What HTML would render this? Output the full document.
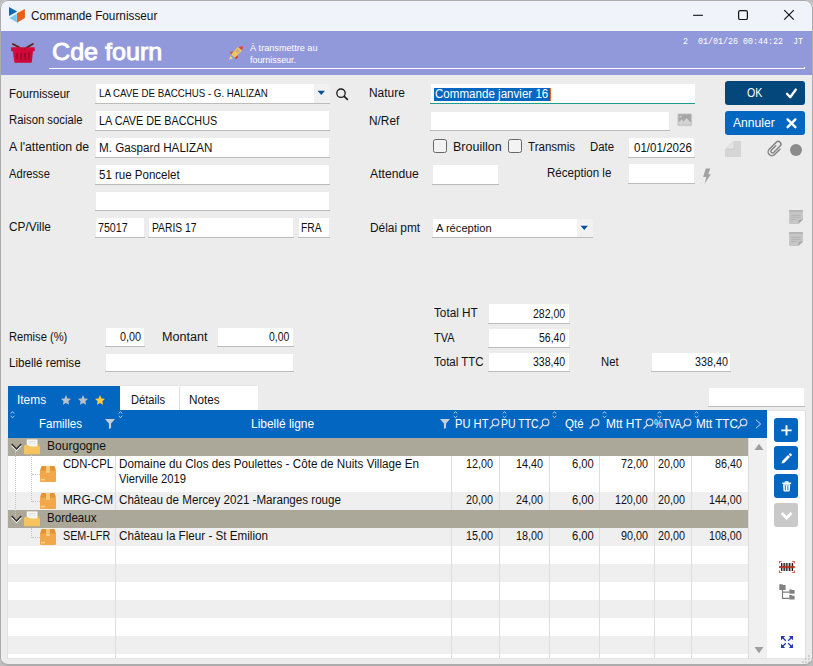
<!DOCTYPE html>
<html><head><meta charset="utf-8"><title>Commande Fournisseur</title>
<style>
*{box-sizing:border-box;margin:0;padding:0}
html,body{width:813px;height:666px;overflow:hidden;background:#bdbdbd;font-family:"Liberation Sans",sans-serif}
#win{position:absolute;left:0;top:0;width:813px;height:666px;background:#ececec;border-radius:8px;overflow:hidden}
#frame{position:absolute;left:0;top:0;width:813px;height:666px;border:1px solid #acacac;border-bottom-width:2px;border-radius:8px;z-index:50}
.t{position:absolute;white-space:pre;line-height:16px;height:16px;transform-origin:0 50%;display:block}
svg{overflow:visible}
</style></head><body>
<div id="win">

<div style="position:absolute;left:0px;top:0px;width:813px;height:31px;background:#f0f3f9;"></div>
<div style="position:absolute;left:0px;top:31px;width:813px;height:44px;background:#9299da;"></div>
<div style="position:absolute;left:49px;top:68px;width:756px;height:1.25px;background:#fff;"></div>
<div style="position:absolute;left:804px;top:67px;width:1px;height:1px;background:#fff;"></div>
<div style="position:absolute;left:95.6px;top:84px;width:218.4px;height:19px;background:#fff;"></div>
<div style="position:absolute;left:314px;top:84px;width:16px;height:19px;background:#f1f1f1;"></div>
<div style="position:absolute;left:95px;top:103px;width:235px;height:1px;background:#bcbcbc;"></div>
<div style="position:absolute;left:95.6px;top:111px;width:233.8px;height:19px;background:#fff;"></div>
<div style="position:absolute;left:95px;top:130px;width:235px;height:1px;background:#bcbcbc;"></div>
<div style="position:absolute;left:95.6px;top:138px;width:233.8px;height:19px;background:#fff;"></div>
<div style="position:absolute;left:95px;top:157px;width:235px;height:1px;background:#bcbcbc;"></div>
<div style="position:absolute;left:95.6px;top:165px;width:233.8px;height:19px;background:#fff;"></div>
<div style="position:absolute;left:95px;top:184px;width:235px;height:1px;background:#bcbcbc;"></div>
<div style="position:absolute;left:95.6px;top:192px;width:233.8px;height:18px;background:#fff;"></div>
<div style="position:absolute;left:95px;top:210px;width:235px;height:1px;background:#bcbcbc;"></div>
<div style="position:absolute;left:95.6px;top:218px;width:48.39999999999999px;height:19px;background:#fff;"></div>
<div style="position:absolute;left:95px;top:237px;width:49.599999999999994px;height:1px;background:#bcbcbc;"></div>
<div style="position:absolute;left:148.6px;top:218px;width:144.8px;height:19px;background:#fff;"></div>
<div style="position:absolute;left:148px;top:237px;width:146px;height:1px;background:#bcbcbc;"></div>
<div style="position:absolute;left:298.6px;top:218px;width:30.8px;height:19px;background:#fff;"></div>
<div style="position:absolute;left:298px;top:237px;width:32px;height:1px;background:#bcbcbc;"></div>
<div style="position:absolute;left:430.6px;top:84px;width:264.1px;height:19px;background:#fff;"></div>
<div style="position:absolute;left:430.2px;top:102.5px;width:264.5px;height:1.5px;background:#1f9d8f;"></div>
<div style="position:absolute;left:434px;top:87.5px;width:116px;height:13.5px;background:#0367c2;"></div>
<div style="position:absolute;left:550px;top:87.5px;width:1px;height:13.5px;background:#e8671c;"></div>
<div style="position:absolute;left:430.8px;top:112.4px;width:238.60000000000002px;height:17.599999999999994px;background:#fff;"></div>
<div style="position:absolute;left:430.2px;top:130px;width:239.8px;height:1px;background:#bcbcbc;"></div>
<div style="position:absolute;left:433px;top:139px;width:14px;height:14px;border:1px solid #666;border-radius:2.5px;background:#f3f3f3"></div>
<div style="position:absolute;left:508px;top:139px;width:14px;height:14px;border:1px solid #666;border-radius:2.5px;background:#f3f3f3"></div>
<div style="position:absolute;left:628.9px;top:138px;width:65.20000000000009px;height:19px;background:#fff;"></div>
<div style="position:absolute;left:628.3px;top:157px;width:66.40000000000009px;height:1px;background:#bcbcbc;"></div>
<div style="position:absolute;left:432.6px;top:165px;width:65.8px;height:19px;background:#fff;"></div>
<div style="position:absolute;left:432px;top:184px;width:67px;height:1px;background:#bcbcbc;"></div>
<div style="position:absolute;left:628.9px;top:164px;width:65.20000000000009px;height:19px;background:#fff;"></div>
<div style="position:absolute;left:628.3px;top:183px;width:66.40000000000009px;height:1px;background:#bcbcbc;"></div>
<div style="position:absolute;left:432.6px;top:219px;width:144.4px;height:18px;background:#fff;"></div>
<div style="position:absolute;left:577px;top:219px;width:16px;height:18px;background:#f1f1f1;"></div>
<div style="position:absolute;left:432px;top:237px;width:161px;height:1px;background:#bcbcbc;"></div>
<div style="position:absolute;left:725px;top:81px;width:80px;height:24px;background:#03477b;border-radius:3px"></div>
<div style="position:absolute;left:725px;top:111px;width:80px;height:24px;background:#0367c2;border-radius:3px"></div>
<div style="position:absolute;left:488.6px;top:304px;width:80.8px;height:19px;background:#fff;"></div>
<div style="position:absolute;left:488px;top:323px;width:82px;height:1px;background:#bcbcbc;"></div>
<div style="position:absolute;left:488.6px;top:329px;width:80.8px;height:18px;background:#fff;"></div>
<div style="position:absolute;left:488px;top:347px;width:82px;height:1px;background:#bcbcbc;"></div>
<div style="position:absolute;left:488.6px;top:353px;width:80.8px;height:18px;background:#fff;"></div>
<div style="position:absolute;left:488px;top:371px;width:82px;height:1px;background:#bcbcbc;"></div>
<div style="position:absolute;left:651.6px;top:353px;width:78.8px;height:18px;background:#fff;"></div>
<div style="position:absolute;left:651px;top:371px;width:80px;height:1px;background:#bcbcbc;"></div>
<div style="position:absolute;left:105.6px;top:328px;width:38.3px;height:18px;background:#fff;"></div>
<div style="position:absolute;left:105px;top:346px;width:39.5px;height:1px;background:#bcbcbc;"></div>
<div style="position:absolute;left:217.6px;top:328px;width:75.8px;height:18px;background:#fff;"></div>
<div style="position:absolute;left:217px;top:346px;width:77px;height:1px;background:#bcbcbc;"></div>
<div style="position:absolute;left:105.6px;top:354px;width:187.8px;height:17px;background:#fff;"></div>
<div style="position:absolute;left:105px;top:371px;width:189px;height:1px;background:#bcbcbc;"></div>
<div style="position:absolute;left:708.6px;top:388px;width:95.8px;height:17.600000000000023px;background:#fff;"></div>
<div style="position:absolute;left:708px;top:405.6px;width:97px;height:1px;background:#bcbcbc;"></div>
<div style="position:absolute;left:8px;top:386px;width:112px;height:24px;background:#0367c2;"></div>
<div style="position:absolute;left:120px;top:386px;width:138.3px;height:24px;background:#fff;"></div>
<div style="position:absolute;left:120px;top:385.4px;width:138.3px;height:1px;background:#e6e6e6;"></div>
<div style="position:absolute;left:258px;top:386px;width:1px;height:24px;background:#e9e9e9;"></div>
<div style="position:absolute;left:179px;top:387px;width:1px;height:23px;background:#dedede;"></div>
<div style="position:absolute;left:8px;top:410px;width:759px;height:28px;background:#0367c2;"></div>
<div style="position:absolute;left:767px;top:410px;width:38px;height:248px;background:#fff;"></div>
<div style="position:absolute;left:805px;top:410px;width:1px;height:248px;background:#dcdcdc;"></div>
<div style="position:absolute;left:767px;top:410px;width:39px;height:1px;background:#e4e4e4;"></div>
<div style="position:absolute;left:8px;top:438px;width:740px;height:220px;background:#fff;"></div>
<div style="position:absolute;left:8px;top:492px;width:740px;height:18px;background:#efefef;"></div>
<div style="position:absolute;left:8px;top:528px;width:740px;height:18px;background:#efefef;"></div>
<div style="position:absolute;left:8px;top:564px;width:740px;height:18px;background:#efefef;"></div>
<div style="position:absolute;left:8px;top:600px;width:740px;height:18px;background:#efefef;"></div>
<div style="position:absolute;left:8px;top:636px;width:740px;height:18px;background:#efefef;"></div>
<div style="position:absolute;left:115px;top:456px;width:1px;height:202px;background:#dedede;"></div>
<div style="position:absolute;left:451px;top:456px;width:1px;height:202px;background:#dedede;"></div>
<div style="position:absolute;left:499px;top:456px;width:1px;height:202px;background:#dedede;"></div>
<div style="position:absolute;left:549px;top:456px;width:1px;height:202px;background:#dedede;"></div>
<div style="position:absolute;left:599px;top:456px;width:1px;height:202px;background:#dedede;"></div>
<div style="position:absolute;left:654px;top:456px;width:1px;height:202px;background:#dedede;"></div>
<div style="position:absolute;left:691px;top:456px;width:1px;height:202px;background:#dedede;"></div>
<div style="position:absolute;left:8px;top:438px;width:740px;height:18px;background:#aca899;"></div>
<div style="position:absolute;left:8px;top:510px;width:740px;height:18px;background:#aca899;"></div>
<div style="position:absolute;left:748px;top:438px;width:19px;height:220px;background:#f0f0f0;"></div>
<div style="position:absolute;left:748px;top:438px;width:1px;height:220px;background:#dddddd;"></div>
<div style="position:absolute;left:7.4px;top:438px;width:1px;height:221px;background:#e1e1e1;"></div>
<div style="position:absolute;left:8px;top:658px;width:798px;height:1px;background:#e3e3e3;"></div>
<div style="position:absolute;left:15px;top:451px;width:0;height:70px;border-left:1px dotted #c6c6c6"></div>
<div style="position:absolute;left:31px;top:455px;width:0;height:47px;border-left:1px dotted #c6c6c6"></div>
<div style="position:absolute;left:32px;top:474px;width:8px;height:0;border-top:1px dotted #c6c6c6"></div>
<div style="position:absolute;left:32px;top:501px;width:8px;height:0;border-top:1px dotted #c6c6c6"></div>
<div style="position:absolute;left:31px;top:528px;width:0;height:10px;border-left:1px dotted #c6c6c6"></div>
<div style="position:absolute;left:32px;top:537px;width:8px;height:0;border-top:1px dotted #c6c6c6"></div>
<div style="position:absolute;left:774px;top:418px;width:24px;height:24px;background:#0367c2;border-radius:3px"></div>
<div style="position:absolute;left:774px;top:446px;width:24px;height:24px;background:#0367c2;border-radius:3px"></div>
<div style="position:absolute;left:774px;top:474px;width:24px;height:24px;background:#0367c2;border-radius:3px"></div>
<div style="position:absolute;left:774px;top:503px;width:24px;height:24px;background:#c9c9c9;border-radius:3px"></div>
<svg style="position:absolute;left:8px;top:6px" width="18" height="18" viewBox="0 0 18 18"><polygon points="1,1 9.2,5.5 1,9.9" fill="#0a6ab8"/><polygon points="1.5,12.1 8.8,7.8 8.8,16.5" fill="#78c8f0"/><polygon points="9,7.3 16.9,3 16.9,12.1 9,16.7" fill="#e86018"/></svg>
<svg style="position:absolute;left:690px;top:8px" width="110" height="16" viewBox="0 0 110 16"><path d="M3.1 7.3h9.8" stroke="#111" stroke-width="1.1" fill="none"/><rect x="48.6" y="2.7" width="8.8" height="8.8" rx="1.6" fill="none" stroke="#111" stroke-width="1.2"/><path d="M94.2 2.1l9.6 9.6M103.8 2.1l-9.6 9.6" stroke="#111" stroke-width="1.2" fill="none"/></svg>
<svg style="position:absolute;left:11px;top:43px" width="24" height="20" viewBox="0 0 24 20"><path d="M1.9 1l6.6 3.6M21.9 1l-6.4 3.6" stroke="#5c2a10" stroke-width="1.8" stroke-linecap="round" fill="none"/><rect x="0" y="4.2" width="23.8" height="4" rx=".8" fill="#d8083c"/><path d="M2 8h20l-1.1 10.7q-.1 1-1.100000000000001 1h-15.4q-1 0-1.100000000000001-1z" fill="#cc0838"/><path d="M2 8h9l-4 11.7h-2.6q-1 0-1.100000000000001-1z" fill="#dc0a40" opacity=".6"/><path d="M6 10.1v6.5M10.1 10.1v6.5M13.9 10.1v6.5M18 10.1v6.5" stroke="#a00828" stroke-width="1.6"/><circle cx="10.5" cy="6.3" r=".7" fill="#6a2a14"/><circle cx="13.5" cy="6.3" r=".7" fill="#6a2a14"/></svg>
<svg style="position:absolute;left:228px;top:45px" width="16" height="16" viewBox="0 0 16 16"><path d="M5.6 6.2l-3.6 .9-.2 1.100000000000001 1.9 .8z" fill="#e2503c"/><path d="M9.7 10.2l.4 2.2-2.8 2.2-.6-2.3z" fill="#d94432"/><polygon points="9.6,2 14.3,5.5 6.9,12.6 3.2,9.8" fill="#f0c660"/><path d="M10.6 2.2q2.2-1.3 4.4-.9 .4 2.3-1 4.3z" fill="#e04a3a"/><circle cx="9.8" cy="6.1" r="1.25" fill="#8ad8f0" stroke="#ea8a3c" stroke-width=".7"/><polygon points="2.5,10.9 4.8,13.5 .9,14.8" fill="#f8d274"/></svg>
<svg style="position:absolute;left:317px;top:90.4px" width="9" height="6" viewBox="0 0 9 6"><polygon points="0.5,0.8 8,0.8 4.25,5" fill="#0a4f9a"/></svg>
<svg style="position:absolute;left:335px;top:87px" width="15" height="15" viewBox="0 0 15 15"><circle cx="6" cy="6.2" r="4.2" fill="none" stroke="#1a1a1a" stroke-width="1.3"/><path d="M9.2 9.4l3.2 3" stroke="#1a1a1a" stroke-width="1.6" stroke-linecap="round"/></svg>
<svg style="position:absolute;left:677.3px;top:113.3px" width="16" height="14" viewBox="0 0 16 14"><rect x=".3" y=".3" width="14.9" height="13" rx="1.6" fill="#cfcfcf"/><rect x="1.4" y="1.3" width="12.7" height="10.2" rx=".5" fill="#a6a6a6"/><path d="M1.4 11.500000000000002v-2l3.2-3.3 2.1 2.2 2.7-3.5 4.7 5v1.6z" fill="#d3d3d3"/><circle cx="3.6" cy="3.7" r="1.1" fill="#c9c9c9"/></svg>
<svg style="position:absolute;left:702px;top:167.6px" width="10" height="17" viewBox="0 0 10 17"><path d="M3.8 .4h4.6l-2.2 5.9h2.700000000000001l-6.4 9.7 1.8-7h-3.2z" fill="#a2a2a2"/></svg>
<svg style="position:absolute;left:580px;top:224.5px" width="9" height="6" viewBox="0 0 9 6"><polygon points="0.5,0.8 8,0.8 4.25,5" fill="#0a4f9a"/></svg>
<svg style="position:absolute;left:785px;top:87px" width="13" height="12" viewBox="0 0 13 12"><path d="M2 6.8l3.2 3.4 5.6-7.6" fill="none" stroke="#fff" stroke-width="2.4" stroke-linecap="round" stroke-linejoin="round"/></svg>
<svg style="position:absolute;left:786px;top:118px" width="11" height="11" viewBox="0 0 11 11"><path d="M1.6 1.4l7.8 7.8M9.4 1.4l-7.8 7.8" stroke="#fff" stroke-width="2.4" stroke-linecap="round"/></svg>
<svg style="position:absolute;left:725px;top:141px" width="16" height="16" viewBox="0 0 16 16"><path d="M8.5 0h7.5v16h-16v-8z" fill="#d5d5d5"/><path d="M.6 8l8.400000000000002-8v8z" fill="#e3e3e3"/><path d="M9.2 .5v7.700000000000001h-8.2" fill="none" stroke="#cbcbcb" stroke-width=".9"/></svg>
<svg style="position:absolute;left:767px;top:140px" width="17" height="17" viewBox="0 0 17 17"><g transform="translate(8.1,8.7) rotate(45) scale(.9)"><path d="M4.2 -3.5V5A4.2 4.2 0 0 1 -4.2 5V-6A3 3 0 0 1 1.8 -6V4A1.8 1.8 0 0 1 -1.8 4V-3" fill="none" stroke="#828282" stroke-width="1.6" stroke-linecap="round"/></g></svg>
<svg style="position:absolute;left:790px;top:144px" width="12" height="12" viewBox="0 0 12 12"><circle cx="6" cy="6" r="6" fill="#8b8b8b"/></svg>
<svg style="position:absolute;left:789px;top:210px" width="14" height="14" viewBox="0 0 14 14"><path d="M1 0h12q1 0 1 1v8.5l-4.5 4.5h-8.5q-1 0-1-1v-12q0-1 1-1z" fill="#c6c6c6"/><path d="M1 0h12q1 0 1 1v.8h-14v-.8q0-1 1-1z" fill="#b4b4b4"/><path d="M9.5 14v-3.500000000000001q0-1 1-1h3.5z" fill="#a9a9a9"/><path d="M2.200000000000001 5.300000000000001h9.6M2.200000000000001 7.4h9.6M2.2 9.5h5" stroke="#b0b0b0" stroke-width=".9"/></svg>
<svg style="position:absolute;left:789px;top:232px" width="14" height="14" viewBox="0 0 14 14"><path d="M1 0h12q1 0 1 1v8.5l-4.5 4.5h-8.5q-1 0-1-1v-12q0-1 1-1z" fill="#c6c6c6"/><path d="M1 0h12q1 0 1 1v.8h-14v-.8q0-1 1-1z" fill="#b4b4b4"/><path d="M9.5 14v-3.500000000000001q0-1 1-1h3.5z" fill="#a9a9a9"/><path d="M2.200000000000001 5.300000000000001h9.6M2.200000000000001 7.4h9.6M2.2 9.5h5" stroke="#b0b0b0" stroke-width=".9"/></svg>
<svg style="position:absolute;left:61px;top:395px" width="10" height="10" viewBox="0 0 10 10"><polygon points="5,0 6.5,3.4 10,3.8 7.4,6.2 8.1,9.7 5,7.9 1.9,9.7 2.6,6.2 0,3.8 3.5,3.4" fill="#bbbfc8"/></svg>
<svg style="position:absolute;left:78px;top:395px" width="10" height="10" viewBox="0 0 10 10"><polygon points="5,0 6.5,3.4 10,3.8 7.4,6.2 8.1,9.7 5,7.9 1.9,9.7 2.6,6.2 0,3.8 3.5,3.4" fill="#bbbfc8"/></svg>
<svg style="position:absolute;left:95px;top:395px" width="10" height="10" viewBox="0 0 10 10"><polygon points="5,0 6.5,3.4 10,3.8 7.4,6.2 8.1,9.7 5,7.9 1.9,9.7 2.6,6.2 0,3.8 3.5,3.4" fill="#ffc83d"/></svg>
<svg style="position:absolute;left:754px;top:444px" width="10" height="6" viewBox="0 0 10 6"><polygon points="5,-0.2 9.5,5.9 0.5,5.9" fill="#9e9e9e"/></svg>
<svg style="position:absolute;left:754px;top:647px" width="10" height="6" viewBox="0 0 10 6"><polygon points="5,6.2 9.5,0.1 0.5,0.1" fill="#9e9e9e"/></svg>
<svg style="position:absolute;left:105px;top:419px" width="10" height="10" viewBox="0 0 10 10"><path d="M0 0h10l-3.9 4.600000000000001v4.4l-2.2 1v-5.4z" fill="#c9cdd6"/></svg>
<svg style="position:absolute;left:439.5px;top:419px" width="10" height="10" viewBox="0 0 10 10"><path d="M0 0h10l-3.9 4.600000000000001v4.4l-2.2 1v-5.4z" fill="#c9cdd6"/></svg>
<svg style="position:absolute;left:488.5px;top:418px" width="11" height="11" viewBox="0 0 11 11"><circle cx="6.6" cy="4.4" r="3.3" fill="none" stroke="#cdd5e4" stroke-width="1.2"/><path d="M4.3 6.8l-3.3 3.4" stroke="#cdd5e4" stroke-width="1.4" stroke-linecap="round"/></svg>
<svg style="position:absolute;left:539px;top:418px" width="11" height="11" viewBox="0 0 11 11"><circle cx="6.6" cy="4.4" r="3.3" fill="none" stroke="#cdd5e4" stroke-width="1.2"/><path d="M4.3 6.8l-3.3 3.4" stroke="#cdd5e4" stroke-width="1.4" stroke-linecap="round"/></svg>
<svg style="position:absolute;left:589px;top:418px" width="11" height="11" viewBox="0 0 11 11"><circle cx="6.6" cy="4.4" r="3.3" fill="none" stroke="#cdd5e4" stroke-width="1.2"/><path d="M4.3 6.8l-3.3 3.4" stroke="#cdd5e4" stroke-width="1.4" stroke-linecap="round"/></svg>
<svg style="position:absolute;left:643px;top:418px" width="11" height="11" viewBox="0 0 11 11"><circle cx="6.6" cy="4.4" r="3.3" fill="none" stroke="#cdd5e4" stroke-width="1.2"/><path d="M4.3 6.8l-3.3 3.4" stroke="#cdd5e4" stroke-width="1.4" stroke-linecap="round"/></svg>
<svg style="position:absolute;left:681px;top:418px" width="11" height="11" viewBox="0 0 11 11"><circle cx="6.6" cy="4.4" r="3.3" fill="none" stroke="#cdd5e4" stroke-width="1.2"/><path d="M4.3 6.8l-3.3 3.4" stroke="#cdd5e4" stroke-width="1.4" stroke-linecap="round"/></svg>
<svg style="position:absolute;left:737px;top:418px" width="11" height="11" viewBox="0 0 11 11"><circle cx="6.6" cy="4.4" r="3.3" fill="none" stroke="#cdd5e4" stroke-width="1.2"/><path d="M4.3 6.8l-3.3 3.4" stroke="#cdd5e4" stroke-width="1.4" stroke-linecap="round"/></svg>
<svg style="position:absolute;left:10px;top:411px" width="5" height="7" viewBox="0 0 5 7"><path d="M.7 2.4l1.8-1.6 1.8 1.6M.7 5l1.8 1.6 1.8-1.6" fill="none" stroke="#e8eef8" stroke-width=".8"/></svg>
<svg style="position:absolute;left:117.5px;top:411px" width="5" height="7" viewBox="0 0 5 7"><path d="M.7 2.4l1.8-1.6 1.8 1.6M.7 5l1.8 1.6 1.8-1.6" fill="none" stroke="#e8eef8" stroke-width=".8"/></svg>
<svg style="position:absolute;left:452.5px;top:411px" width="5" height="7" viewBox="0 0 5 7"><path d="M.7 2.4l1.8-1.6 1.8 1.6M.7 5l1.8 1.6 1.8-1.6" fill="none" stroke="#e8eef8" stroke-width=".8"/></svg>
<svg style="position:absolute;left:502px;top:411px" width="5" height="7" viewBox="0 0 5 7"><path d="M.7 2.4l1.8-1.6 1.8 1.6M.7 5l1.8 1.6 1.8-1.6" fill="none" stroke="#e8eef8" stroke-width=".8"/></svg>
<svg style="position:absolute;left:551.8px;top:411px" width="5" height="7" viewBox="0 0 5 7"><path d="M.7 2.4l1.8-1.6 1.8 1.6M.7 5l1.8 1.6 1.8-1.6" fill="none" stroke="#e8eef8" stroke-width=".8"/></svg>
<svg style="position:absolute;left:602px;top:411px" width="5" height="7" viewBox="0 0 5 7"><path d="M.7 2.4l1.8-1.6 1.8 1.6M.7 5l1.8 1.6 1.8-1.6" fill="none" stroke="#e8eef8" stroke-width=".8"/></svg>
<svg style="position:absolute;left:656.5px;top:411px" width="5" height="7" viewBox="0 0 5 7"><path d="M.7 2.4l1.8-1.6 1.8 1.6M.7 5l1.8 1.6 1.8-1.6" fill="none" stroke="#e8eef8" stroke-width=".8"/></svg>
<svg style="position:absolute;left:693.5px;top:411px" width="5" height="7" viewBox="0 0 5 7"><path d="M.7 2.4l1.8-1.6 1.8 1.6M.7 5l1.8 1.6 1.8-1.6" fill="none" stroke="#e8eef8" stroke-width=".8"/></svg>
<svg style="position:absolute;left:755px;top:419px" width="7" height="10" viewBox="0 0 7 10"><path d="M1 .8l4.6 4.2-4.6 4.2" fill="none" stroke="#e8eef8" stroke-width=".9"/></svg>
<svg style="position:absolute;left:11.4px;top:442.6px" width="11" height="8" viewBox="0 0 11 8"><path d="M.8 1.300000000000001l4.7 4.8 4.7-4.8" fill="none" stroke="#f6f6f2" stroke-width="1.5" transform="translate(0,1.2)"/><path d="M.8 1.1l4.7 4.8 4.7-4.8" fill="none" stroke="#2e2e2e" stroke-width="1.5"/></svg>
<svg style="position:absolute;left:24px;top:439px" width="16" height="15.6" viewBox="0 0 16 15.6"><path d="M10.5 5.1h4.5q1 0 1 1v3h-5.5z" fill="#e6ae48"/><rect x="2.7" y=".4" width="10.8" height="8.6" fill="#f6f6f6"/><path d="M4.3 2.5h7.600000000000001M4.3 4.2h7.6" stroke="#dedede" stroke-width=".8"/><path d="M0 7.2q0-1.1 1-1.1h3.4l1.4 1.3h9.2q1 0 1 1v5.800000000000001q0 1-1 1h-14q-1 0-1-1z" fill="#f6c45e"/></svg>
<svg style="position:absolute;left:11.4px;top:514.6px" width="11" height="8" viewBox="0 0 11 8"><path d="M.8 1.300000000000001l4.7 4.8 4.7-4.8" fill="none" stroke="#f6f6f2" stroke-width="1.5" transform="translate(0,1.2)"/><path d="M.8 1.1l4.7 4.8 4.7-4.8" fill="none" stroke="#2e2e2e" stroke-width="1.5"/></svg>
<svg style="position:absolute;left:24px;top:511px" width="16" height="15.6" viewBox="0 0 16 15.6"><path d="M10.5 5.1h4.5q1 0 1 1v3h-5.5z" fill="#e6ae48"/><rect x="2.7" y=".4" width="10.8" height="8.6" fill="#f6f6f6"/><path d="M4.3 2.5h7.600000000000001M4.3 4.2h7.6" stroke="#dedede" stroke-width=".8"/><path d="M0 7.2q0-1.1 1-1.1h3.4l1.4 1.3h9.2q1 0 1 1v5.800000000000001q0 1-1 1h-14q-1 0-1-1z" fill="#f6c45e"/></svg>
<svg style="position:absolute;left:40px;top:466px" width="16" height="16" viewBox="0 0 16 16"><rect x="0" y="4" width="16" height="12" rx="1" fill="#f2a74a"/><path d="M1.5 0h13l1.5 4.5h-16z" fill="#e3932f"/><rect x="6" y="0" width="4" height="7" fill="#f9c878"/><rect x="1" y="12.8" width="4" height="1.6" fill="#f9d48a"/></svg>
<svg style="position:absolute;left:40px;top:493px" width="16" height="16" viewBox="0 0 16 16"><rect x="0" y="4" width="16" height="12" rx="1" fill="#f2a74a"/><path d="M1.5 0h13l1.5 4.5h-16z" fill="#e3932f"/><rect x="6" y="0" width="4" height="7" fill="#f9c878"/><rect x="1" y="12.8" width="4" height="1.6" fill="#f9d48a"/></svg>
<svg style="position:absolute;left:40px;top:529px" width="16" height="16" viewBox="0 0 16 16"><rect x="0" y="4" width="16" height="12" rx="1" fill="#f2a74a"/><path d="M1.5 0h13l1.5 4.5h-16z" fill="#e3932f"/><rect x="6" y="0" width="4" height="7" fill="#f9c878"/><rect x="1" y="12.8" width="4" height="1.6" fill="#f9d48a"/></svg>
<svg style="position:absolute;left:774px;top:418px" width="24" height="24" viewBox="0 0 24 24"><path d="M12.5 7.2v10.4M7.300000000000001 12.4h10.4" stroke="#fff" stroke-width="1.9" fill="none"/></svg>
<svg style="position:absolute;left:774px;top:446px" width="24" height="24" viewBox="0 0 24 24"><path d="M7.5 17.6l.7-2.700000000000001 5.8-5.8 2 2-5.800000000000001 5.8z" fill="#fff"/><path d="M14.7 8.4l1-1q.5-.5 1 0l1 1q.5 .5 0 1l-1 1z" fill="#fff"/></svg>
<svg style="position:absolute;left:774px;top:474px" width="24" height="24" viewBox="0 0 24 24"><path d="M9 10.3h7.2l-.5 6.5q-.1 .8-.9 .8h-4.4q-.8 0-.9-.8z" fill="#fff"/><rect x="8.2" y="8.4" width="9" height="1.5" rx=".4" fill="#fff"/><rect x="10.7" y="7.2" width="4" height="1.5" rx=".5" fill="#fff"/><path d="M11.3 11.200000000000001v5.2M13.9 11.2v5.2" stroke="#0367c2" stroke-width=".9"/></svg>
<svg style="position:absolute;left:774px;top:503px" width="24" height="24" viewBox="0 0 24 24"><path d="M7.7 9.9l4.9 5 4.9-5" fill="none" stroke="#fff" stroke-width="2.8"/></svg>
<svg style="position:absolute;left:779px;top:561px" width="16" height="12" viewBox="0 0 16 12"><rect x="2" y="2" width="12.2" height="8" fill="#bdbdbd"/><path d="M2.6 2v8M5.2 2v8M7.8 2v8M10.6 2v8M13.5 2v8" stroke="#1c1c1c" stroke-width="1.1"/><rect x="0" y="4.9" width="15.8" height="2.2" fill="#b53520" opacity=".9"/><path d="M.5 2.6v-2.1h2.1M15.3 2.6v-2.1h-2.1M.5 9.4v2.1h2.1M15.3 9.4v2.1h-2.1" stroke="#e2583e" stroke-width="1.1" fill="none"/></svg>
<svg style="position:absolute;left:779px;top:584px" width="17" height="16" viewBox="0 0 17 16"><path d="M.3 .3h3l.8 .8h2.5v4.8h-6.3z" fill="#828282"/><path d="M10.3 5.4h2.4l.7 .7h2.2v3.6h-5.3z" fill="#828282"/><path d="M10.3 11.1h2.4l.7 .7h2.2v3.7h-5.3z" fill="#828282"/><path d="M3.5 5.800000000000001v8.6h7M3.5 8.1h7" fill="none" stroke="#7e7e7e" stroke-width="1.2"/></svg>
<svg style="position:absolute;left:781px;top:636px" width="12" height="12" viewBox="0 0 12 12"><g fill="#2236b6" stroke="#2236b6"><path d="M0 0h4.2l-4.2 4.2z" stroke="none"/><path d="M12 0h-4.2l4.2 4.2z" stroke="none"/><path d="M0 12h4.2l-4.2-4.2z" stroke="none"/><path d="M12 12h-4.2l4.2-4.2z" stroke="none"/><path d="M1.5 1.5l3.300000000000001 3.3M10.5 1.5l-3.3 3.3M1.5 10.5l3.3-3.3M10.5 10.5l-3.3-3.3" stroke-width="1.3" fill="none"/></g></svg>
<svg style="position:absolute;left:800px;top:654px" width="10" height="10" viewBox="0 0 10 10"><path d="M8.2 2h1.500000000000001M5.2 5h1.5M8.2 5h1.5M2.2 8h1.5M5.2 8h1.5M8.2 8h1.5" stroke="#bdbdbd" stroke-width="1.5"/></svg>
<span class="t" id="t0" style="left:30.90px;top:7.84px;font-size:12px;color:#111;transform:scaleX(0.9812);">Commande Fournisseur</span>
<span class="t" id="t1" style="left:51.55px;top:43.68px;font-size:24px;color:#fff;transform:scaleX(1.0461);-webkit-text-stroke:0.9px #fff;">Cde fourn</span>
<span class="t" id="t2" style="left:250.30px;top:40.01px;font-size:9.5px;color:#fff;transform:scaleX(0.9608);">À transmettre au</span>
<span class="t" id="t3" style="left:250.30px;top:51.61px;font-size:9.5px;color:#fff;transform:scaleX(0.9367);">fournisseur.</span>
<span class="t" id="t4" style="left:682.90px;top:34.31px;font-size:9.5px;color:#fff;font-family:'Liberation Mono';transform:scaleX(0.8773);">2  01/01/26 00:44:22  JT</span>
<span class="t" id="t5" style="left:9.30px;top:85.84px;font-size:12px;color:#111;transform:scaleX(0.9612);">Fournisseur</span>
<span class="t" id="t6" style="left:9.30px;top:112.34px;font-size:12px;color:#111;transform:scaleX(0.9430);">Raison sociale</span>
<span class="t" id="t7" style="left:9.30px;top:139.34px;font-size:12px;color:#111;transform:scaleX(1.0222);">A l'attention de</span>
<span class="t" id="t8" style="left:9.30px;top:166.34px;font-size:12px;color:#111;transform:scaleX(0.9290);">Adresse</span>
<span class="t" id="t9" style="left:9.30px;top:219.34px;font-size:12px;color:#111;transform:scaleX(0.9862);">CP/Ville</span>
<span class="t" id="t10" style="left:98.90px;top:85.36px;font-size:10.5px;color:#111;transform:scaleX(0.9253);">LA CAVE DE BACCHUS - G. HALIZAN</span>
<span class="t" id="t11" style="left:98.90px;top:112.84px;font-size:12px;color:#111;transform:scaleX(0.9013);">LA CAVE DE BACCHUS</span>
<span class="t" id="t12" style="left:98.90px;top:139.84px;font-size:12px;color:#111;transform:scaleX(0.9721);">M. Gaspard HALIZAN</span>
<span class="t" id="t13" style="left:98.90px;top:166.84px;font-size:12px;color:#111;transform:scaleX(0.9596);">51 rue Poncelet</span>
<span class="t" id="t14" style="left:98.30px;top:219.84px;font-size:12px;color:#111;transform:scaleX(0.8874);">75017</span>
<span class="t" id="t15" style="left:151.90px;top:219.84px;font-size:12px;color:#111;transform:scaleX(0.8594);">PARIS 17</span>
<span class="t" id="t16" style="left:300.90px;top:219.84px;font-size:12px;color:#111;transform:scaleX(0.8626);">FRA</span>
<span class="t" id="t17" style="left:368.50px;top:84.84px;font-size:12px;color:#111;transform:scaleX(0.9933);">Nature</span>
<span class="t" id="t18" style="left:368.50px;top:112.84px;font-size:12px;color:#111;transform:scaleX(0.9860);">N/Ref</span>
<span class="t" id="t19" style="left:370.40px;top:165.84px;font-size:12px;color:#111;transform:scaleX(1.0152);">Attendue</span>
<span class="t" id="t20" style="left:370.40px;top:219.84px;font-size:12px;color:#111;transform:scaleX(0.9893);">Délai pmt</span>
<span class="t" id="t21" style="left:435.30px;top:85.84px;font-size:12px;color:#fff;transform:scaleX(0.9650);">Commande janvier 16</span>
<span class="t" id="t22" style="left:453.20px;top:139.14px;font-size:12px;color:#111;transform:scaleX(1.0409);">Brouillon</span>
<span class="t" id="t23" style="left:528.30px;top:139.14px;font-size:12px;color:#111;transform:scaleX(0.9634);">Transmis</span>
<span class="t" id="t24" style="left:589.90px;top:139.14px;font-size:12px;color:#111;transform:scaleX(0.9465);">Date</span>
<span class="t" id="t25" style="left:633.70px;top:139.84px;font-size:12px;color:#111;transform:scaleX(0.9638);">01/01/2026</span>
<span class="t" id="t26" style="left:547.40px;top:164.84px;font-size:12px;color:#111;transform:scaleX(0.9652);">Réception le</span>
<span class="t" id="t27" style="left:436.30px;top:219.96px;font-size:10.5px;color:#111;transform:scaleX(1.0605);">A réception</span>
<span class="t" id="t28" style="left:746.60px;top:84.84px;font-size:12px;color:#fff;transform:scaleX(0.8827);">OK</span>
<span class="t" id="t29" style="left:733.40px;top:115.34px;font-size:12px;color:#fff;transform:scaleX(1.0105);">Annuler</span>
<span class="t" id="t30" style="left:433.80px;top:304.84px;font-size:12px;color:#111;transform:scaleX(0.9791);">Total HT</span>
<span class="t" id="t31" style="left:433.80px;top:329.84px;font-size:12px;color:#111;transform:scaleX(0.9090);">TVA</span>
<span class="t" id="t32" style="left:433.80px;top:354.14px;font-size:12px;color:#111;transform:scaleX(0.9591);">Total TTC</span>
<span class="t" id="t33" style="left:533.20px;top:305.84px;font-size:12px;color:#111;transform:scaleX(0.8777);">282,00</span>
<span class="t" id="t34" style="left:539.20px;top:330.34px;font-size:12px;color:#111;transform:scaleX(0.8730);">56,40</span>
<span class="t" id="t35" style="left:533.20px;top:354.34px;font-size:12px;color:#111;transform:scaleX(0.8777);">338,40</span>
<span class="t" id="t36" style="left:601.20px;top:354.14px;font-size:12px;color:#111;transform:scaleX(0.9411);">Net</span>
<span class="t" id="t37" style="left:694.90px;top:354.34px;font-size:12px;color:#111;transform:scaleX(0.8966);">338,40</span>
<span class="t" id="t38" style="left:9.30px;top:329.14px;font-size:12px;color:#111;transform:scaleX(0.9302);">Remise (%)</span>
<span class="t" id="t39" style="left:120.10px;top:329.44px;font-size:12px;color:#111;transform:scaleX(0.9037);">0,00</span>
<span class="t" id="t40" style="left:162.20px;top:329.14px;font-size:12px;color:#111;transform:scaleX(1.0494);">Montant</span>
<span class="t" id="t41" style="left:269.30px;top:329.44px;font-size:12px;color:#111;transform:scaleX(0.8699);">0,00</span>
<span class="t" id="t42" style="left:9.30px;top:355.24px;font-size:12px;color:#111;transform:scaleX(0.9669);">Libellé remise</span>
<span class="t" id="t43" style="left:17.11px;top:391.84px;font-size:12px;color:#fff;transform:scaleX(0.9916);">Items</span>
<span class="t" id="t44" style="left:130.50px;top:391.84px;font-size:12px;color:#111;transform:scaleX(0.9269);">Détails</span>
<span class="t" id="t45" style="left:188.90px;top:391.84px;font-size:12px;color:#111;transform:scaleX(0.9793);">Notes</span>
<span class="t" id="t46" style="left:39.10px;top:415.84px;font-size:12px;color:#fff;transform:scaleX(0.9603);">Familles</span>
<span class="t" id="t47" style="left:251.20px;top:415.84px;font-size:12px;color:#fff;transform:scaleX(0.9968);">Libellé ligne</span>
<span class="t" id="t48" style="left:455.40px;top:415.84px;font-size:12px;color:#fff;transform:scaleX(0.9299);">PU HT</span>
<span class="t" id="t49" style="left:500.50px;top:415.84px;font-size:12px;color:#fff;transform:scaleX(0.8726);">PU TTC</span>
<span class="t" id="t50" style="left:564.70px;top:415.84px;font-size:12px;color:#fff;transform:scaleX(0.9610);">Qté</span>
<span class="t" id="t51" style="left:606.40px;top:415.84px;font-size:12px;color:#fff;transform:scaleX(0.9928);">Mtt HT</span>
<span class="t" id="t52" style="left:654.20px;top:415.84px;font-size:12px;color:#fff;transform:scaleX(0.8244);">%TVA</span>
<span class="t" id="t53" style="left:695.60px;top:415.84px;font-size:12px;color:#fff;transform:scaleX(0.9712);">Mtt TTC</span>
<span class="t" id="t54" style="left:46.90px;top:437.84px;font-size:12px;color:#111;transform:scaleX(1.0044);">Bourgogne</span>
<span class="t" id="t55" style="left:46.90px;top:509.84px;font-size:12px;color:#111;transform:scaleX(0.9636);">Bordeaux</span>
<span class="t" id="t56" style="left:62.90px;top:455.84px;font-size:12px;color:#111;transform:scaleX(0.9373);">CDN-CPL</span>
<span class="t" id="t57" style="left:63.20px;top:491.84px;font-size:12px;color:#111;transform:scaleX(0.9870);">MRG-CM</span>
<span class="t" id="t58" style="left:63.20px;top:527.84px;font-size:12px;color:#111;transform:scaleX(0.8962);">SEM-LFR</span>
<span class="t" id="t59" style="left:119.40px;top:455.84px;font-size:12px;color:#111;transform:scaleX(0.9719);">Domaine du Clos des Poulettes - Côte de Nuits Village En</span>
<span class="t" id="t60" style="left:119.40px;top:471.04px;font-size:12px;color:#111;transform:scaleX(0.9328);">Vierville 2019</span>
<span class="t" id="t61" style="left:119.40px;top:491.84px;font-size:12px;color:#111;transform:scaleX(0.9674);">Château de Mercey 2021 -Maranges rouge</span>
<span class="t" id="t62" style="left:119.40px;top:527.84px;font-size:12px;color:#111;transform:scaleX(0.9710);">Château la Fleur - St Emilion</span>
<span class="t" id="t63" style="left:466.40px;top:455.84px;font-size:12px;color:#111;transform:scaleX(0.8993);">12,00</span>
<span class="t" id="t64" style="left:515.90px;top:455.84px;font-size:12px;color:#111;transform:scaleX(0.8993);">14,40</span>
<span class="t" id="t65" style="left:571.60px;top:455.84px;font-size:12px;color:#111;transform:scaleX(0.9332);">6,00</span>
<span class="t" id="t66" style="left:620.90px;top:455.84px;font-size:12px;color:#111;transform:scaleX(0.8993);">72,00</span>
<span class="t" id="t67" style="left:657.90px;top:455.84px;font-size:12px;color:#111;transform:scaleX(0.8993);">20,00</span>
<span class="t" id="t68" style="left:714.90px;top:455.84px;font-size:12px;color:#111;transform:scaleX(0.8993);">86,40</span>
<span class="t" id="t69" style="left:466.40px;top:491.84px;font-size:12px;color:#111;transform:scaleX(0.8993);">20,00</span>
<span class="t" id="t70" style="left:515.90px;top:491.84px;font-size:12px;color:#111;transform:scaleX(0.8993);">24,00</span>
<span class="t" id="t71" style="left:571.60px;top:491.84px;font-size:12px;color:#111;transform:scaleX(0.9332);">6,00</span>
<span class="t" id="t72" style="left:615.30px;top:491.84px;font-size:12px;color:#111;transform:scaleX(0.8885);">120,00</span>
<span class="t" id="t73" style="left:657.90px;top:491.84px;font-size:12px;color:#111;transform:scaleX(0.8993);">20,00</span>
<span class="t" id="t74" style="left:709.30px;top:491.84px;font-size:12px;color:#111;transform:scaleX(0.8885);">144,00</span>
<span class="t" id="t75" style="left:466.40px;top:527.84px;font-size:12px;color:#111;transform:scaleX(0.8993);">15,00</span>
<span class="t" id="t76" style="left:515.90px;top:527.84px;font-size:12px;color:#111;transform:scaleX(0.8993);">18,00</span>
<span class="t" id="t77" style="left:571.60px;top:527.84px;font-size:12px;color:#111;transform:scaleX(0.9332);">6,00</span>
<span class="t" id="t78" style="left:620.90px;top:527.84px;font-size:12px;color:#111;transform:scaleX(0.8993);">90,00</span>
<span class="t" id="t79" style="left:657.90px;top:527.84px;font-size:12px;color:#111;transform:scaleX(0.8993);">20,00</span>
<span class="t" id="t80" style="left:709.30px;top:527.84px;font-size:12px;color:#111;transform:scaleX(0.8885);">108,00</span>
</div>
<div id="frame"></div>
</body></html>
